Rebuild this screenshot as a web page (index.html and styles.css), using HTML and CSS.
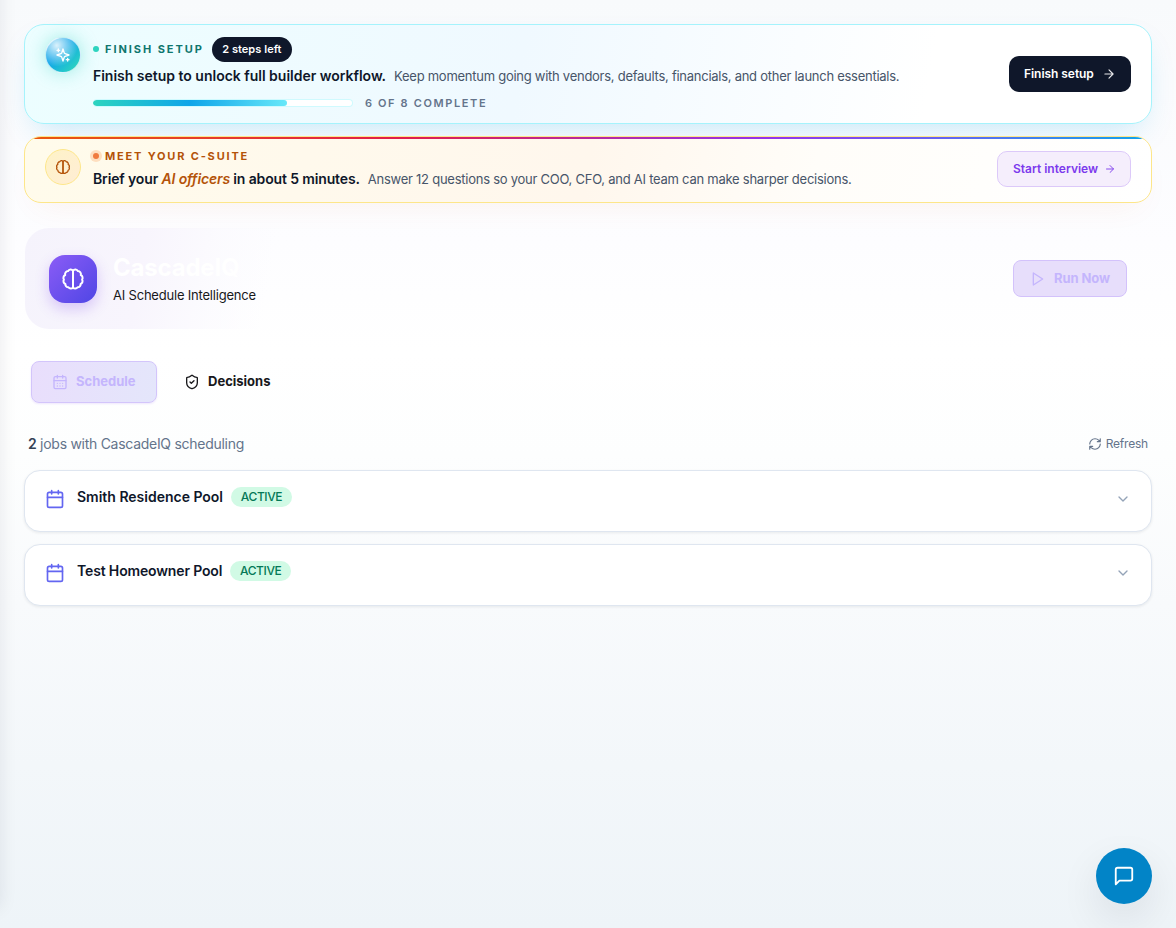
FILE: index.html
```html
<!DOCTYPE html>
<html lang="en">

<head>
  <meta charset="UTF-8">
  <meta name="viewport" content="width=device-width, initial-scale=1.0">
  <title>CascadeIQ</title>
  <link rel="stylesheet" href="styles.css">
</head>

<body>
  <main class="page">
    <section class="banner banner-setup">
      <div class="orb">
        <svg class="icon" width="16" height="16" viewBox="0 0 24 24">
          <path d="m12 3-1.912 5.813a2 2 0 0 1-1.275 1.275L3 12l5.813 1.912a2 2 0 0 1 1.275 1.275L12 21l1.912-5.813a2 2 0 0 1 1.275-1.275L21 12l-5.813-1.912a2 2 0 0 1-1.275-1.275L12 3Z" />
          <path d="M5 3v4M19 17v4M3 5h4M17 19h4" />
        </svg>
      </div>
      <div class="banner-body">
        <div class="eyebrow eyebrow-setup">
          <span class="dot dot-teal"></span>
          <span class="eyebrow-text">FINISH SETUP</span>
          <span class="steps">2 steps left</span>
        </div>
        <div class="banner-line">
          <strong class="setup-title">Finish setup to unlock full builder workflow.</strong>
          <span class="setup-desc">Keep momentum going with vendors, defaults, financials, and other launch essentials.</span>
        </div>
        <div class="progress-row">
          <div class="progress"><div class="progress-fill" style="width: 75%"></div></div>
          <span class="progress-text">6 OF 8 COMPLETE</span>
        </div>
      </div>
      <button class="btn btn-dark">
        <span>Finish setup</span>
        <svg class="icon" width="14" height="14" viewBox="0 0 24 24"><path d="M5 12h14M12 5l7 7-7 7" /></svg>
      </button>
    </section>

    <section class="banner banner-suite">
      <div class="badge-brain">
        <svg class="icon" width="16" height="16" viewBox="0 0 24 24">
          <path d="M12 3.600A2.900 2.900 0 0 0 7.100 4.100 3 3 0 0 0 4.200 8 3.200 3.200 0 0 0 2.900 12.600 3 3 0 0 0 4.400 17 3 3 0 0 0 7.400 20.300 2.900 2.900 0 0 0 12 20.600Z" />
          <path d="M12 3.600A2.900 2.900 0 0 1 16.900 4.100 3 3 0 0 1 19.800 8 3.200 3.200 0 0 1 21.100 12.600 3 3 0 0 1 19.600 17 3 3 0 0 1 16.600 20.300 2.900 2.900 0 0 1 12 20.600Z" />
        </svg>
      </div>
      <div class="banner-body">
        <div class="eyebrow eyebrow-suite">
          <span class="dot dot-orange"></span>
          <span class="eyebrow-text">MEET YOUR C-SUITE</span>
        </div>
        <div class="banner-line">
          <strong class="suite-title">Brief your <em>AI officers</em> in about 5 minutes.</strong>
          <span class="suite-desc">Answer 12 questions so your COO, CFO, and AI team can make sharper decisions.</span>
        </div>
      </div>
      <button class="btn btn-violet">
        <span>Start interview</span>
        <svg class="icon" width="12" height="12" viewBox="0 0 24 24"><path d="M5 12h14M12 5l7 7-7 7" /></svg>
      </button>
    </section>

    <header class="hero">
      <div class="hero-icon">
        <svg class="icon" width="24" height="24" viewBox="0 0 24 24">
          <path d="M12 3.600A2.900 2.900 0 0 0 7.100 4.100 3 3 0 0 0 4.200 8 3.200 3.200 0 0 0 2.900 12.600 3 3 0 0 0 4.400 17 3 3 0 0 0 7.400 20.300 2.900 2.900 0 0 0 12 20.600Z" />
          <path d="M12 3.600A2.900 2.900 0 0 1 16.900 4.100 3 3 0 0 1 19.800 8 3.200 3.200 0 0 1 21.100 12.600 3 3 0 0 1 19.600 17 3 3 0 0 1 16.600 20.300 2.900 2.900 0 0 1 12 20.600Z" />
        </svg>
      </div>
      <div class="hero-text">
        <h1>CascadeIQ</h1>
        <p>AI Schedule Intelligence</p>
      </div>
      <button class="run">
        <svg class="icon" width="16" height="16" viewBox="0 0 24 24"><path d="M5 3l14 9-14 9V3z" /></svg>
        <span>Run Now</span>
      </button>
    </header>

    <nav class="tabs">
      <button class="tab tab-active">
        <svg class="icon" width="16" height="16" viewBox="0 0 24 24">
          <rect x="3" y="4" width="18" height="18" rx="2" />
          <path d="M16 2v4M8 2v4M3 10h18M8 14h.01M12 14h.01M16 14h.01M8 18h.01M12 18h.01M16 18h.01" />
        </svg>
        <span>Schedule</span>
      </button>
      <button class="tab">
        <svg class="icon" width="16" height="16" viewBox="0 0 24 24">
          <path d="M20 13c0 5-3.5 7.5-7.66 8.95a1 1 0 0 1-.67-.01C7.5 20.5 4 18 4 13V6a1 1 0 0 1 1-1c2 0 4.500-1.200 6.240-2.720a1.170 1.170 0 0 1 1.520 0C14.510 3.810 17 5 19 5a1 1 0 0 1 1 1z" />
          <path d="m9 12 2 2 4-4" />
        </svg>
        <span>Decisions</span>
      </button>
    </nav>

    <div class="list-head">
      <p class="count"><b>2</b> jobs with CascadeIQ scheduling</p>
      <button class="refresh">
        <svg class="icon" width="14" height="14" viewBox="0 0 24 24">
          <path d="M3 12a9 9 0 0 1 9-9 9.750 9.750 0 0 1 6.740 2.740L21 8M21 3v5h-5M21 12a9 9 0 0 1-9 9 9.750 9.750 0 0 1-6.740-2.740L3 16M8 16H3v5" />
        </svg>
        <span>Refresh</span>
      </button>
    </div>

    <div class="jobs">
      <article class="job">
        <svg class="icon job-icon" width="20" height="20" viewBox="0 0 24 24">
          <rect x="3" y="4" width="18" height="18" rx="2" />
          <path d="M16 2v4M8 2v4M3 10h18" />
        </svg>
        <h2 class="job-smith">Smith Residence Pool</h2>
        <span class="status">ACTIVE</span>
        <svg class="icon chevron" width="16" height="16" viewBox="0 0 24 24"><path d="m6 9 6 6 6-6" /></svg>
      </article>
      <article class="job">
        <svg class="icon job-icon" width="20" height="20" viewBox="0 0 24 24">
          <rect x="3" y="4" width="18" height="18" rx="2" />
          <path d="M16 2v4M8 2v4M3 10h18" />
        </svg>
        <h2 class="job-test">Test Homeowner Pool</h2>
        <span class="status">ACTIVE</span>
        <svg class="icon chevron" width="16" height="16" viewBox="0 0 24 24"><path d="m6 9 6 6 6-6" /></svg>
      </article>
    </div>
  </main>

  <button class="chat" aria-label="Chat">
    <svg class="icon" width="22" height="22" viewBox="0 0 24 24"><path d="M21 15a2 2 0 0 1-2 2H7l-4 4V5a2 2 0 0 1 2-2h14a2 2 0 0 1 2 2z" /></svg>
  </button>
</body>

</html>
```

FILE: styles.css
```css
* {
  box-sizing: border-box;
  margin: 0;
  padding: 0;
}

body {
  min-height: 928px;
  overflow: hidden;
  font-family: Inter, "Liberation Sans", sans-serif;
  color: #0f172a;
  background: linear-gradient(180deg, #f8fafc 0%, #fdfdff 26%, #ffffff 38%, #fdfefe 49%, #f8fafc 65%, #eef4f8 100%);
}

/* soft edge left by the sidebar */
body::before {
  content: "";
  position: absolute;
  top: -20px;
  left: -20px;
  width: 20px;
  height: 928px;
  box-shadow: 0 0 18px rgba(15, 23, 42, 0.09);
}

button {
  font-family: inherit;
  border: none;
  cursor: pointer;
}

.icon {
  display: block;
  flex: none;
  fill: none;
  stroke: currentColor;
  stroke-width: 2;
  stroke-linecap: round;
  stroke-linejoin: round;
}

.page {
  padding: 24px;
}

.banner {
  position: relative;
  display: flex;
  align-items: flex-start;
  gap: 12px;
  padding: 12px 20px;
  border: 1px solid #a5f3fc;
  border-radius: 20px;
}

.banner-setup {
  height: 100px;
  background: linear-gradient(100deg, #ecfeff 0%, #f0f9ff 44%, #ffffff 80%);
  box-shadow: 0 14px 32px -12px rgba(14, 165, 233, 0.25);
}

.banner-suite {
  height: 67px;
  margin-top: 12px;
  overflow: hidden;
  border-color: #fde68a;
  border-radius: 17px;
  background: linear-gradient(100deg, #fffbeb 0%, #fff7ed 50%, #fffdf9 70%, #ffffff 100%);
  box-shadow: 0 14px 32px -14px rgba(234, 88, 12, 0.08);
}

.banner-suite::before {
  content: "";
  position: absolute;
  top: 0;
  left: 0;
  right: 0;
  height: 2px;
  background: linear-gradient(90deg, #ea580c, #e11d48 33%, #9333ea 66%, #6366f1 82%, #0ea5e9);
}

.orb,
.badge-brain {
  display: flex;
  flex: none;
  align-items: center;
  justify-content: center;
  width: 36px;
  height: 36px;
  border-radius: 50%;
}

.orb {
  color: #fff;
  border: 1px solid rgba(255, 255, 255, 0.7);
  background: radial-gradient(circle at 32% 22%, rgba(255, 255, 255, 0.85), rgba(255, 255, 255, 0) 60%), linear-gradient(135deg, #0ea5e9 40%, #2dd4bf 90%);
  box-shadow: 0 0 18px rgba(45, 212, 191, 0.4);
}

.badge-brain {
  color: #b45309;
  border: 1px solid #fde68a;
  background: linear-gradient(135deg, #fef3c7, #ffedd5);
}

.banner-body {
  flex: 1;
}

.eyebrow {
  display: flex;
  align-items: center;
  font-size: 11px;
  font-weight: 700;
}

.eyebrow-setup {
  height: 25px;
  color: #0f766e;
  letter-spacing: 1.95px;
}

.eyebrow-setup .dot,
.eyebrow-setup .eyebrow-text {
  margin-bottom: 2px;
}

.eyebrow-suite {
  height: 14px;
  color: #b45309;
  letter-spacing: 1.82px;
}

.dot {
  width: 6px;
  height: 6px;
  margin-right: 6px;
  border-radius: 50%;
}

.dot-teal {
  background: #2dd4bf;
}

.dot-orange {
  background: #f07b3f;
  box-shadow: 0 0 0 3px rgba(249, 115, 22, 0.2);
}

.steps {
  width: 80px;
  height: 25px;
  margin-left: 8px;
  line-height: 24px;
  text-align: center;
  font-weight: 600;
  letter-spacing: 0.05px;
  color: #fff;
  border-radius: 13px;
  background: #0f172a;
}

.banner-line {
  display: flex;
  align-items: center;
  gap: 8px;
  height: 20px;
  margin-top: 4px;
  white-space: nowrap;
  font-size: 13px;
  color: #475569;
}

.banner-line strong {
  line-height: 20px;
  padding-bottom: 1px;
  font-size: 14px;
  font-weight: 600;
  color: #0f172a;
}

.banner-line em {
  color: #b45309;
}

.setup-title {
  letter-spacing: -0.01px;
}

.suite-title {
  letter-spacing: -0.14px;
}

.setup-desc {
  letter-spacing: -0.265px;
}

.suite-desc {
  letter-spacing: -0.25px;
}

.banner-suite .banner-line {
  margin-top: 6px;
}

.progress-row {
  display: flex;
  align-items: center;
  gap: 12px;
  margin-top: 10px;
}

.progress {
  width: 260px;
  height: 8px;
  overflow: hidden;
  border: 1px solid #cffafe;
  border-width: 1px 1px 1px 0;
  border-radius: 4px;
  background: #fff;
}

.progress-fill {
  height: 6px;
  border-radius: 3px;
  background: linear-gradient(90deg, #2dd4bf, #0ea5e9 50%, #67e8f9);
}

.progress-text {
  line-height: 14px;
  font-size: 11px;
  font-weight: 600;
  letter-spacing: 1.62px;
  color: #64748b;
}

.btn {
  display: flex;
  flex: none;
  align-items: center;
  justify-content: space-between;
  align-self: center;
  height: 36px;
  padding: 0 15px 1px;
  font-size: 12px;
  font-weight: 600;
  border-radius: 10px;
}

.btn-dark {
  width: 122px;
  color: #fff;
  background: #0f172a;
  letter-spacing: -0.05px;
}

.btn-violet {
  width: 134px;
  margin-top: -1px;
  padding: 0 14px 1px 15px;
  color: #7c3aed;
  border: 1px solid #dcc9f9;
  background: #f5eefc;
}

.btn .icon {
  opacity: 0.9;
}

.hero {
  display: flex;
  align-items: center;
  height: 101px;
  margin: 25px 1px 0;
  padding: 0 24px;
  border-radius: 24px;
  background: linear-gradient(100deg, #f5f3fc 0, #f8f5fd 120px, rgba(251, 250, 254, 0.8) 190px, rgba(255, 255, 255, 0) 250px);
}

.hero-icon {
  display: flex;
  align-items: center;
  justify-content: center;
  width: 48px;
  height: 48px;
  color: #fff;
  border-radius: 16px;
  background: linear-gradient(135deg, #8b5cf6, #4f46e5);
  box-shadow: 0 6px 14px rgba(124, 58, 237, 0.25);
}

.hero-text {
  flex: 1;
  margin-left: 16px;
}

.hero h1 {
  line-height: 32px;
  font-size: 24px;
  font-weight: 700;
  letter-spacing: -0.2px;
  color: #fff;
}

.hero p {
  margin: 1px 0;
  line-height: 20px;
  font-size: 13px;
  letter-spacing: -0.2px;
  color: #18181b;
}

.run {
  display: flex;
  align-items: center;
  gap: 8px;
  width: 114px;
  height: 37px;
  padding-left: 16px;
  font-size: 13px;
  font-weight: 700;
  letter-spacing: -0.08px;
  color: #c4b5fd;
  border: 1px solid #d3c2fb;
  border-radius: 8px;
  background: #e7defb;
}

.tabs {
  display: flex;
  gap: 7px;
  margin: 32px 7px 0;
}

.tab {
  display: flex;
  align-items: center;
  gap: 8px;
  height: 42px;
  padding: 0 20px;
  font-size: 13px;
  font-weight: 700;
  color: #18181b;
  border-radius: 8px;
  background: none;
}

.run span {
  padding-bottom: 1px;
}

.tab span {
  padding-bottom: 2px;
}

.tab-active {
  width: 126px;
  color: #c4b5fd;
  border: 1px solid #d3c5fb;
  background: linear-gradient(100deg, #e9defc, #e4e6fb);
  box-shadow: 0 1px 2px rgba(124, 58, 237, 0.12);
}

.list-head {
  display: flex;
  align-items: center;
  justify-content: space-between;
  height: 20px;
  margin: 31px 4px 0;
}

.count {
  padding-bottom: 2px;
  font-size: 14px;
  letter-spacing: -0.28px;
  color: #64748b;
}

.count b {
  font-weight: 600;
  color: #334155;
}

.refresh {
  display: flex;
  align-items: center;
  gap: 4px;
  font-size: 12px;
  letter-spacing: -0.2px;
  color: #64748b;
  background: none;
}

.refresh span {
  padding-bottom: 1px;
}

.jobs {
  display: grid;
  gap: 12px;
  margin-top: 16px;
}

.job {
  display: flex;
  align-items: flex-start;
  height: 62px;
  padding: 16px 20px;
  border: 1px solid #dfe6f0;
  border-radius: 16px;
  background: #fff;
  box-shadow: 0 1px 3px rgba(15, 23, 42, 0.08);
}

.job-icon {
  margin-top: 2px;
  color: #6366f1;
}

.job h2 {
  margin-left: 12px;
  line-height: 20px;
  font-size: 14px;
  font-weight: 600;
}

.job-smith {
  letter-spacing: -0.01px;
}

.job-test {
  letter-spacing: -0.15px;
}

.status {
  width: 61px;
  height: 20px;
  margin-left: 8px;
  line-height: 20px;
  text-align: center;
  font-size: 12px;
  font-weight: 500;
  letter-spacing: -0.4px;
  color: #047857;
  border-radius: 10px;
  background: #d1fae5;
}

.chevron {
  margin-top: 4px;
  margin-left: auto;
  color: #94a3b8;
}

.chat {
  position: fixed;
  right: 24px;
  bottom: 24px;
  display: flex;
  align-items: center;
  justify-content: center;
  width: 56px;
  height: 56px;
  color: #fff;
  border-radius: 50%;
  background: #0284c7;
  box-shadow: 0 16px 40px rgba(15, 23, 42, 0.09);
}
```
